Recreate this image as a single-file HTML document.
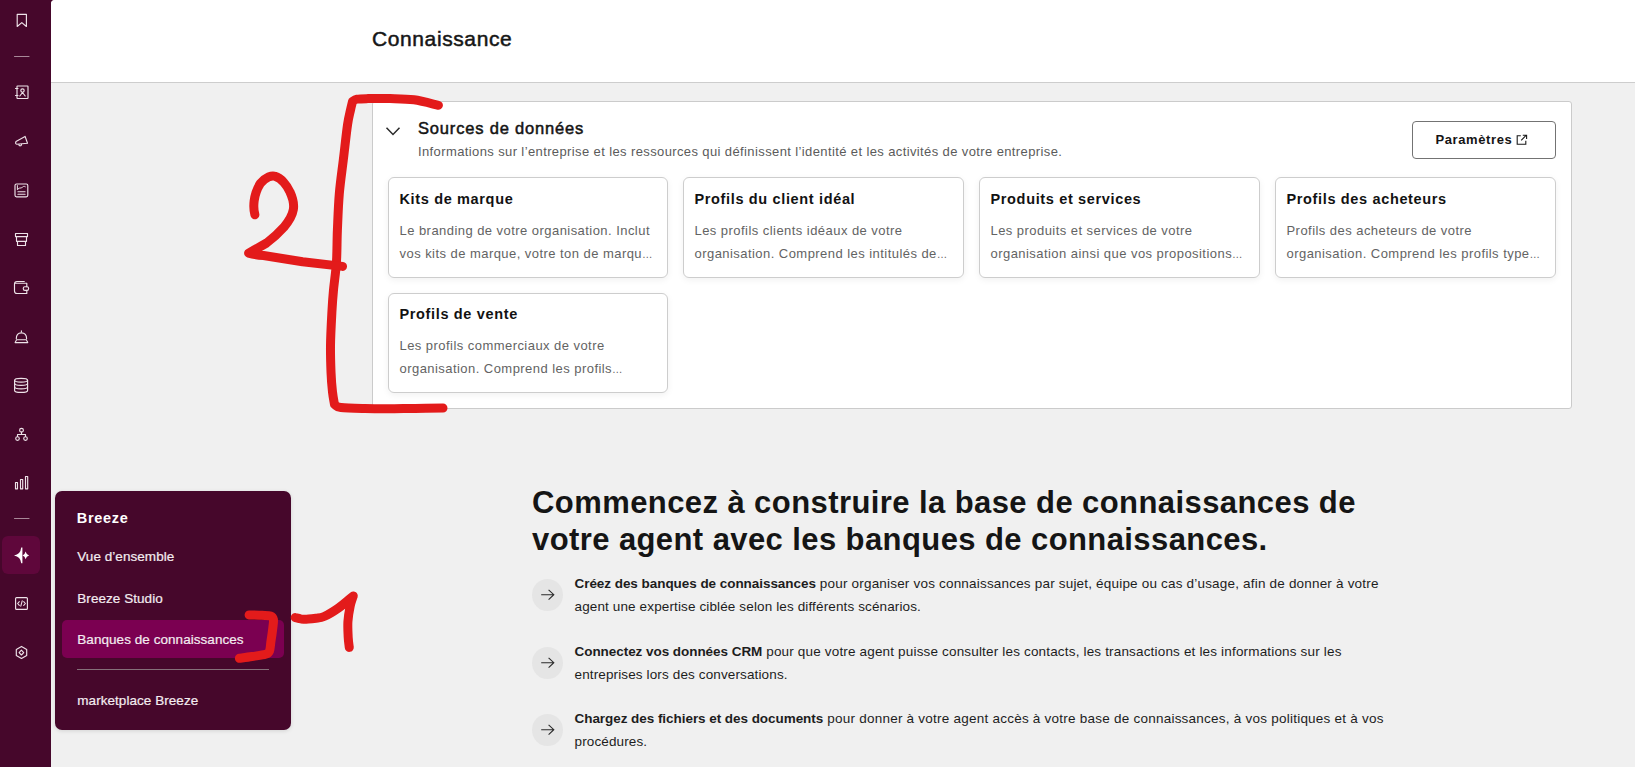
<!DOCTYPE html>
<html><head><meta charset="utf-8"><style>
*{margin:0;padding:0;box-sizing:border-box}
html,body{width:1635px;height:767px;overflow:hidden;background:#46072b;font-family:"Liberation Sans",sans-serif;color:#1f1f1f;position:relative}
.t{position:absolute;white-space:nowrap}
.a{position:absolute}
.lb b{letter-spacing:-0.05px}
.card{position:absolute;width:280px;height:101px;border:1px solid #cdcdcd;border-radius:6px;background:#fff;box-shadow:0 2px 7px rgba(0,0,0,.06)}
</style></head><body>
<div class="a" style="left:51px;top:0;width:1584px;height:767px;background:#f0f0f0;border-top-left-radius:4px;overflow:hidden"><div class="a" style="left:0;top:0;width:1584px;height:83px;background:#fff;border-bottom:1px solid #cdcdcd"></div></div>
<div class="t" style="left:372px;top:24.97px;font-size:21px;line-height:27.3px;font-weight:normal;color:#161616;letter-spacing:0.6px;-webkit-text-stroke:0.5px #161616">Connaissance</div>
<div class="a" style="left:372px;top:101px;width:1200px;height:308px;background:#fff;border:1px solid #cbcbcb;border-radius:3px"></div>
<svg class="a" style="left:384px;top:124px" width="18" height="14" viewBox="0 0 18 14"><path d="M2.5 3.8 L9 10.5 L15.5 3.8" fill="none" stroke="#2a2a2a" stroke-width="1.5"/></svg>
<div class="t" style="left:418px;top:117.56px;font-size:16.5px;line-height:21.45px;font-weight:normal;color:#141414;letter-spacing:0.82px;-webkit-text-stroke:0.5px #141414">Sources de données</div>
<div class="t" style="left:418px;top:143.65px;font-size:13px;line-height:16.9px;font-weight:normal;color:#5b5b5b;letter-spacing:0.385px;">Informations sur l’entreprise et les ressources qui définissent l’identité et les activités de votre entreprise.</div>
<div class="a" style="left:1412px;top:121px;width:144px;height:38px;border:1px solid #737373;border-radius:4px;background:#fff"></div>
<div class="t" style="left:1435.5px;top:132.15px;font-size:13px;line-height:16.9px;font-weight:bold;color:#141414;letter-spacing:0.6px;">Paramètres</div>
<svg class="a" style="left:1516px;top:134px" width="12" height="12" viewBox="0 0 12 12" fill="none" stroke="#1a1a1a" stroke-width="1.1"><path d="M4.8 1.7 H1.2 V10.3 H9.8 V6.8"/><path d="M5.2 6.3 L10.3 1.2 M6.8 1.2 H10.6 V5"/></svg>
<div class="card" style="left:388px;top:177px;width:280px;height:101px"></div>
<div class="t" style="left:399.5px;top:189.75px;font-size:14.5px;line-height:18.85px;font-weight:bold;color:#121212;letter-spacing:0.65px;">Kits de marque</div>
<div class="t" style="left:399.5px;top:223.45px;font-size:13px;line-height:16.9px;font-weight:normal;color:#636363;letter-spacing:0.45px;">Le branding de votre organisation. Inclut</div>
<div class="t" style="left:399.5px;top:245.75px;font-size:13px;line-height:16.9px;font-weight:normal;color:#636363;letter-spacing:0.45px;">vos kits de marque, votre ton de marqu<span style="font-size:10.5px;letter-spacing:0">…</span></div>
<div class="card" style="left:683px;top:177px;width:281px;height:101px"></div>
<div class="t" style="left:694.5px;top:189.75px;font-size:14.5px;line-height:18.85px;font-weight:bold;color:#121212;letter-spacing:0.65px;">Profils du client idéal</div>
<div class="t" style="left:694.5px;top:223.45px;font-size:13px;line-height:16.9px;font-weight:normal;color:#636363;letter-spacing:0.45px;">Les profils clients idéaux de votre</div>
<div class="t" style="left:694.5px;top:245.75px;font-size:13px;line-height:16.9px;font-weight:normal;color:#636363;letter-spacing:0.45px;">organisation. Comprend les intitulés de<span style="font-size:10.5px;letter-spacing:0">…</span></div>
<div class="card" style="left:979px;top:177px;width:281px;height:101px"></div>
<div class="t" style="left:990.5px;top:189.75px;font-size:14.5px;line-height:18.85px;font-weight:bold;color:#121212;letter-spacing:0.65px;">Produits et services</div>
<div class="t" style="left:990.5px;top:223.45px;font-size:13px;line-height:16.9px;font-weight:normal;color:#636363;letter-spacing:0.45px;">Les produits et services de votre</div>
<div class="t" style="left:990.5px;top:245.75px;font-size:13px;line-height:16.9px;font-weight:normal;color:#636363;letter-spacing:0.45px;">organisation ainsi que vos propositions<span style="font-size:10.5px;letter-spacing:0">…</span></div>
<div class="card" style="left:1275px;top:177px;width:281px;height:101px"></div>
<div class="t" style="left:1286.5px;top:189.75px;font-size:14.5px;line-height:18.85px;font-weight:bold;color:#121212;letter-spacing:0.65px;">Profils des acheteurs</div>
<div class="t" style="left:1286.5px;top:223.45px;font-size:13px;line-height:16.9px;font-weight:normal;color:#636363;letter-spacing:0.45px;">Profils des acheteurs de votre</div>
<div class="t" style="left:1286.5px;top:245.75px;font-size:13px;line-height:16.9px;font-weight:normal;color:#636363;letter-spacing:0.45px;">organisation. Comprend les profils type<span style="font-size:10.5px;letter-spacing:0">…</span></div>
<div class="card" style="left:388px;top:293px;width:280px;height:100px"></div>
<div class="t" style="left:399.5px;top:304.65px;font-size:14.5px;line-height:18.85px;font-weight:bold;color:#121212;letter-spacing:0.65px;">Profils de vente</div>
<div class="t" style="left:399.5px;top:338.35px;font-size:13px;line-height:16.9px;font-weight:normal;color:#636363;letter-spacing:0.45px;">Les profils commerciaux de votre</div>
<div class="t" style="left:399.5px;top:360.65px;font-size:13px;line-height:16.9px;font-weight:normal;color:#636363;letter-spacing:0.45px;">organisation. Comprend les profils<span style="font-size:10.5px;letter-spacing:0">…</span></div>
<div class="t" style="left:532px;top:483.31px;font-size:31px;line-height:40.3px;font-weight:bold;color:#151515;letter-spacing:0.42px;">Commencez à construire la base de connaissances de</div>
<div class="t" style="left:532px;top:520.11px;font-size:31px;line-height:40.3px;font-weight:bold;color:#151515;letter-spacing:0.41px;">votre agent avec les banques de connaissances.</div>
<div class="a" style="left:532px;top:579px;width:31px;height:31.5px;border-radius:50%;background:#e5e5e5"></div>
<svg class="a" style="left:532px;top:579px" width="32" height="32" viewBox="0 0 32 32"><path d="M9.2 15.7 H22 M16.6 10.8 L21.8 15.7 L16.6 20.6" fill="none" stroke="#2a2a2a" stroke-width="1.1"/></svg>
<div class="t lb" style="left:574.5px;top:575.15px;font-size:13.5px;line-height:17.55px;font-weight:normal;color:#1d1d1d;letter-spacing:0.19px;"><b>Créez des banques de connaissances</b> pour organiser vos connaissances par sujet, équipe ou cas d’usage, afin de donner à votre</div>
<div class="t" style="left:574.5px;top:597.95px;font-size:13.5px;line-height:17.55px;font-weight:normal;color:#1d1d1d;letter-spacing:0.13px;">agent une expertise ciblée selon les différents scénarios.</div>
<div class="a" style="left:532px;top:647px;width:31px;height:31.5px;border-radius:50%;background:#e5e5e5"></div>
<svg class="a" style="left:532px;top:647px" width="32" height="32" viewBox="0 0 32 32"><path d="M9.2 15.7 H22 M16.6 10.8 L21.8 15.7 L16.6 20.6" fill="none" stroke="#2a2a2a" stroke-width="1.1"/></svg>
<div class="t lb" style="left:574.5px;top:643.15px;font-size:13.5px;line-height:17.55px;font-weight:normal;color:#1d1d1d;letter-spacing:0.17px;"><b>Connectez vos données CRM</b> pour que votre agent puisse consulter les contacts, les transactions et les informations sur les</div>
<div class="t" style="left:574.5px;top:665.95px;font-size:13.5px;line-height:17.55px;font-weight:normal;color:#1d1d1d;letter-spacing:0.13px;">entreprises lors des conversations.</div>
<div class="a" style="left:532px;top:714.3px;width:31px;height:31.5px;border-radius:50%;background:#e5e5e5"></div>
<svg class="a" style="left:532px;top:714.3px" width="32" height="32" viewBox="0 0 32 32"><path d="M9.2 15.7 H22 M16.6 10.8 L21.8 15.7 L16.6 20.6" fill="none" stroke="#2a2a2a" stroke-width="1.1"/></svg>
<div class="t lb" style="left:574.5px;top:710.45px;font-size:13.5px;line-height:17.55px;font-weight:normal;color:#1d1d1d;letter-spacing:0.235px;"><b>Chargez des fichiers et des documents</b> pour donner à votre agent accès à votre base de connaissances, à vos politiques et à vos</div>
<div class="t" style="left:574.5px;top:733.25px;font-size:13.5px;line-height:17.55px;font-weight:normal;color:#1d1d1d;letter-spacing:0.13px;">procédures.</div>
<svg class="a" style="left:0;top:0" width="51" height="767" viewBox="0 0 51 767" fill="none" stroke="#eee3e9" stroke-width="1.15" stroke-linejoin="round" stroke-linecap="round">
 <path d="M17.2 14.3 H26.4 V26.5 L21.8 22.6 L17.2 26.5 Z"/>
 <path d="M14.5 56.5 H29" stroke="#a88898"/>
 <rect x="17" y="86" width="11" height="12.5" rx="0.5"/>
 <path d="M15.5 88.5 H18 M15.5 95.5 H18"/>
 <circle cx="22.5" cy="90.5" r="1.7"/>
 <path d="M19.8 96 L22.5 92.5 L25.2 96"/>
 <path d="M16 141.4 Q14.9 143.9 16.8 144.2 L27.5 143.2 L25.1 136.4 Z"/>
 <path d="M18.9 144.6 A1.3 1.3 0 1 0 21.5 144.4"/>
 <rect x="15" y="184" width="12.8" height="12.8" rx="1.5"/>
 <path d="M17.4 185.6 V189.4 M17.6 189.3 Q19.3 187.6 21.2 187.9 Q22.6 187.2 23.6 186.4 Q24.6 186.2 25.3 186.7" stroke-width="1"/>
 <path d="M17.9 191.7 H25.1 M17.9 194.3 H25.1" stroke-width="1.1"/>
 <path d="M15.5 233.5 H27.5 V236.6 H15.5 Z M16.5 236.6 H26.5 V241.3 H16.5 Z M17.5 241.3 H25.5 V245.5 H17.5 Z"/>
 <path d="M24.3 281.5 H17 Q14.5 281.5 14.5 284 V291 Q14.5 293.5 17 293.5 H26.8 V290.3 M15.6 283.2 H26.8 V286.7"/>
 <rect x="23.3" y="286.7" width="5.3" height="3.6" rx="1.6"/>
 <path d="M16.3 338.8 Q16.3 332.8 21.4 332.8 Q26.6 332.8 26.6 338.8"/>
 <path d="M16.6 339.7 H26.3 L27.8 342.6 H15.1 Z" stroke-width="1.05"/>
 <path d="M21.4 330.9 V331.9"/>
 <ellipse cx="21.1" cy="380.2" rx="6.5" ry="1.9"/>
 <path d="M14.6 380.2 V390.4 Q14.6 392.4 21.1 392.4 Q27.6 392.4 27.6 390.4 V380.2"/>
 <path d="M14.6 383.2 Q14.6 385.3 21.1 385.3 Q27.6 385.3 27.6 383.2 M14.6 386.7 Q14.6 388.8 21.1 388.8 Q27.6 388.8 27.6 386.7"/>
 <circle cx="21.5" cy="430.3" r="1.9"/>
 <circle cx="17.5" cy="438.5" r="1.8"/>
 <circle cx="25.5" cy="438.5" r="1.8"/>
 <path d="M21.5 432 V434.5 M17.5 436.5 V434.5 H25.5 V436.5"/>
 <rect x="15.5" y="482.5" width="2" height="6.3"/>
 <rect x="20.5" y="479.5" width="2.2" height="9.3"/>
 <rect x="25.5" y="476.5" width="2.2" height="12.3"/>
 <path d="M14.5 518.5 H29" stroke="#a88898"/>
 <rect x="15.6" y="597.6" width="11.8" height="11.8" rx="1"/>
 <path d="M19.3 601.6 L17.6 603.5 L19.3 605.4 M23.7 601.6 L25.4 603.5 L23.7 605.4 M22.2 600.9 L20.8 606.2" stroke-width="1.1"/>
 <path d="M21.5 646.4 L26.7 649.4 V655.4 L21.5 658.4 L16.3 655.4 V649.4 Z"/>
 <path d="M21.4 650.2 L23.7 652.6 L21.4 655 L19.1 652.6 Z"/>
</svg>
<div class="a" style="left:2px;top:536px;width:38px;height:38px;border-radius:6px;background:#5f073b"></div>
<svg class="a" style="left:0;top:536px" width="51" height="38" viewBox="0 536 51 38"><path fill="#fff" d="M21.2 547.6 L22.4 547.6 L22.4 563.2 L21.2 563.2 Q20.6 556.6 14.0 555.5 Q20.6 554.4 21.2 547.6 Z M25.6 551.6 Q26.3 554.8 29.1 555.5 Q26.3 556.2 25.6 559.3 Q24.9 556.2 22.6 555.5 Q24.9 554.8 25.6 551.6 Z"/></svg>
<div class="a" style="left:55px;top:491px;width:236px;height:239px;border-radius:7px;background:#46072b;box-shadow:0 1px 4px rgba(0,0,0,.12)"></div>
<div class="a" style="left:62px;top:620px;width:222px;height:38px;border-radius:5px;background:#7b0051"></div>
<div class="a" style="left:77px;top:669px;width:192px;height:1px;background:#857079"></div>
<div class="t" style="left:76.8px;top:508.65px;font-size:14.5px;line-height:18.85px;font-weight:bold;color:#ffffff;letter-spacing:0.7px;">Breeze</div>
<div class="t" style="left:77.3px;top:548.35px;font-size:13.5px;line-height:17.55px;font-weight:normal;color:#f3ecf0;letter-spacing:0.05px;-webkit-text-stroke:0.2px #f3ecf0">Vue d’ensemble</div>
<div class="t" style="left:77.3px;top:589.95px;font-size:13.5px;line-height:17.55px;font-weight:normal;color:#f3ecf0;letter-spacing:0.05px;-webkit-text-stroke:0.2px #f3ecf0">Breeze Studio</div>
<div class="t" style="left:77.3px;top:630.95px;font-size:13.5px;line-height:17.55px;font-weight:normal;color:#f3ecf0;letter-spacing:0.05px;-webkit-text-stroke:0.2px #f3ecf0">Banques de connaissances</div>
<div class="t" style="left:77.3px;top:691.65px;font-size:13.5px;line-height:17.55px;font-weight:normal;color:#f3ecf0;letter-spacing:0.05px;-webkit-text-stroke:0.2px #f3ecf0">marketplace Breeze</div>

<svg class="a" style="left:0;top:0" width="1635" height="767" viewBox="0 0 1635 767" fill="none" stroke="#e31b1b" stroke-width="9" stroke-linecap="round" stroke-linejoin="round">
 <path d="M438.4 105.3 C434.3 104.4 422.1 100.9 414.0 99.8 C405.9 98.7 397.7 98.8 390.0 98.6 C382.3 98.4 373.5 98.5 368.0 98.6 C362.5 98.7 359.6 98.7 357.0 99.2 C354.4 99.7 353.2 101.1 352.5 101.5 L352.5 101.5 C352.2 102.9 351.3 106.1 350.5 110.0 C349.7 113.9 348.7 116.7 347.5 125.0 C346.3 133.3 344.7 148.5 343.3 160.0 C341.9 171.5 340.3 182.1 339.3 193.8 C338.3 205.5 337.9 218.7 337.4 230.0 C336.9 241.3 337.1 251.4 336.5 261.4 C335.9 271.4 334.3 281.6 333.5 290.0 C332.7 298.4 332.4 302.7 331.9 312.0 C331.4 321.3 330.6 335.8 330.5 345.8 C330.4 355.8 330.7 364.3 331.0 372.0 C331.3 379.7 331.9 386.6 332.5 392.0 C333.1 397.4 334.2 402.4 334.5 404.5 L334.5 404.5 C335.6 405.0 335.9 406.8 341.0 407.5 C346.1 408.2 357.2 408.4 365.0 408.6 C372.8 408.8 379.7 408.8 388.0 408.8 C396.3 408.8 405.8 408.5 415.0 408.4 C424.2 408.3 438.3 408.1 443.0 408.0"/>
 <path d="M254.9 214.8 C253 208 253 195 260.3 183.5 C266 177 272 175 275.2 176.4 C281 178 287 185 290 192 C296 205 295 214 283.8 227.3 C276 236 266.6 243 266.6 243 C258 248 248.6 253.1 248.6 253.1 C255 255 263.5 255.5 263.5 255.5 L302.6 261.7 L342.5 266.4"/>
 <path d="M249.1 614.9 C251.2 615.0 258.4 615.1 262.0 615.3 C265.6 615.5 268.6 615.3 270.5 616.0 C272.4 616.7 273.0 617.5 273.4 619.5 C273.8 621.5 273.2 624.4 272.8 628.0 C272.4 631.6 271.6 637.2 271.0 641.0 C270.4 644.8 270.4 648.8 269.5 651.0 C268.6 653.2 268.4 653.4 265.5 654.3 C262.6 655.2 256.4 655.8 252.0 656.5 C247.7 657.2 241.5 658.0 239.4 658.3"/>
 <path d="M295.2 617.6 C296.2 617.8 298.8 618.6 301.0 618.9 C303.2 619.1 306.0 619.2 308.5 619.1 C311.0 619.0 313.4 618.7 316.0 618.3 C318.6 617.9 320.4 618.2 324.1 616.5 C327.9 614.8 333.6 611.4 338.5 608.0 C343.4 604.6 350.8 597.9 353.3 595.9 L353.3 595.9 C352.8 597.6 351.1 601.8 350.2 606.1 C349.3 610.4 348.2 616.5 347.9 621.7 C347.6 626.9 348.0 633.1 348.2 637.4 C348.4 641.7 349.1 645.7 349.3 647.4"/>
</svg>
</body></html>
